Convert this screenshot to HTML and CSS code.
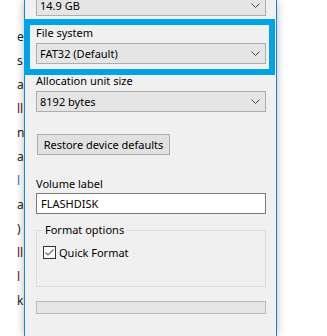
FILE: index.html
```html
<!DOCTYPE html>
<html lang="en">
<head>
  <meta charset="UTF-8" />
  <title>Format USB Drive</title>
  <link rel="stylesheet" href="styles.css">
</head>
<body>
  <div class="screen">
    <div class="backdrop">
      <span>e</span>
      <span>s</span>
      <span>a</span>
      <span class="red">ll</span>
      <span>n</span>
      <span>a</span>
      <span class="blue">l</span>
      <span>a</span>
      <span>)</span>
      <span class="red">ll</span>
      <span class="red">l</span>
      <span>k</span>
    </div>

    <div class="dialog">
      <div class="highlight"></div>

      <div class="combo first">
        <span>14.9 GB</span>
        <svg class="chevron" width="9" height="5" viewBox="0 0 9 5"><polyline points="0.5,0.5 4.5,4.5 8.5,0.5" /></svg>
      </div>

      <div class="label">File system</div>
      <div class="combo">
        <span>FAT32 (Default)</span>
        <svg class="chevron" width="9" height="5" viewBox="0 0 9 5"><polyline points="0.5,0.5 4.5,4.5 8.5,0.5" /></svg>
      </div>

      <div class="label">Allocation unit size</div>
      <div class="combo">
        <span>8192 bytes</span>
        <svg class="chevron" width="9" height="5" viewBox="0 0 9 5"><polyline points="0.5,0.5 4.5,4.5 8.5,0.5" /></svg>
      </div>

      <button class="btn">Restore device defaults</button>

      <div class="label volume">Volume label</div>
      <div class="textbox">FLASHDISK</div>

      <fieldset class="group">
        <legend>Format options</legend>
        <div class="check">
          <span class="box">
            <svg width="11" height="11" viewBox="0 0 11 11"><polyline points="1.5,5.5 4,8 9.5,2.5" /></svg>
          </span>
          <span>Quick Format</span>
        </div>
      </fieldset>

      <div class="progress"></div>
    </div>
  </div>
</body>
</html>
```

FILE: styles.css
```css
body {
  margin: 0;
  background: #fff;
  font-family: 'Noto Sans', 'Open Sans', sans-serif;
  font-size: 11px;
  color: #000;
}
.screen {
  display: flex;
  height: 336px;
  overflow: hidden;
}
.backdrop {
  width: 24px;
  flex-shrink: 0;
  overflow: hidden;
  display: flex;
  flex-direction: column;
  padding-top: 25px;
  box-sizing: border-box;
}
.backdrop span {
  display: block;
  height: 24px;
  line-height: 24px;
  padding-left: 17px;
  font-size: 12px;
  color: #222;
  white-space: nowrap;
}
.backdrop .red { color: #5a1020; }
.backdrop .blue { color: #3a6ea8; }
.dialog {
  position: relative;
  z-index: 1;
  width: 230px;
  flex-shrink: 0;
  padding: 0 10px 0 11px;
  background: #f0f0f0;
  border-left: 1px solid #1883d7;
  border-right: 1px solid #1883d7;
  box-shadow: 0 0 8px rgba(0, 0, 0, 0.28);
  display: flex;
  flex-direction: column;
  align-items: flex-start;
}
.highlight {
  position: absolute;
  left: -1px;
  top: 19px;
  width: 239px;
  height: 44px;
  border: 6px solid #00a2e8;
}
.combo {
  box-sizing: border-box;
  width: 230px;
  height: 21px;
  margin-top: 3px;
  padding: 0 5px 0 3px;
  background: #e5e5e5;
  border: 1px solid #adadad;
  display: flex;
  align-items: center;
  justify-content: space-between;
  flex-shrink: 0;
}
.combo.first {
  margin-top: -5px;
}
.chevron polyline {
  fill: none;
  stroke: #444;
  stroke-width: 1;
}
.label {
  height: 15px;
  line-height: 15px;
  margin-top: 9px;
}
.label + .combo {
  margin-top: 3px;
}
.btn {
  box-sizing: border-box;
  margin: 22px 0 0 1px;
  width: 133px;
  height: 21px;
  padding: 0;
  background: #e1e1e1;
  border: 1px solid #adadad;
  font-family: inherit;
  font-size: 11px;
  color: #000;
}
.label.volume {
  margin-top: 21px;
}
.textbox {
  box-sizing: border-box;
  width: 230px;
  height: 21px;
  margin-top: 2px;
  padding: 0 4px;
  line-height: 19px;
  background: #fff;
  border: 1px solid #7a7a7a;
}
.group {
  box-sizing: border-box;
  width: 230px;
  margin: 9px 0 0;
  padding: 0 6px;
  border: 1px solid #dcdcdc;
}
.group legend {
  padding: 0 2px;
  line-height: 14px;
}
.check {
  display: flex;
  align-items: center;
  gap: 3px;
  margin: 9px 0 27px;
  height: 13px;
}
.box {
  box-sizing: border-box;
  width: 13px;
  height: 13px;
  border: 1px solid #333;
  background: #fff;
  display: flex;
}
.box polyline {
  fill: none;
  stroke: #6a6a6a;
  stroke-width: 1.2;
}
.progress {
  box-sizing: border-box;
  width: 230px;
  height: 13px;
  margin-top: 14px;
  background: #e6e6e6;
  border: 1px solid #bcbcbc;
}
```
